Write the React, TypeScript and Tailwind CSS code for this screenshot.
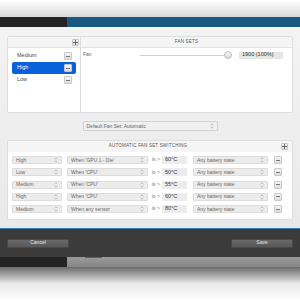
import React from "react";

const font = { fontFamily: '"Liberation Sans", Arial, sans-serif' };

function UpDown() {
  return (
    <svg width="4" height="6" viewBox="0 0 4 6" className="shrink-0">
      <path d="M0.5 2.3 L2 0.8 L3.5 2.3" fill="none" stroke="#999" strokeWidth="0.6" />
      <path d="M0.5 3.7 L2 5.2 L3.5 3.7" fill="none" stroke="#999" strokeWidth="0.6" />
    </svg>
  );
}

function Select({ label, w }: { label: string; w: string }) {
  return (
    <div
      className={`${w} h-[8px] shrink-0 flex items-center justify-between rounded-[1px] border border-[#dcdcdc] bg-[#ececec] pl-[3px] pr-[3px] text-[5px] leading-none text-[#666]`}
    >
      <span className="whitespace-nowrap">{label}</span>
      <UpDown />
    </div>
  );
}

function MinusBtn({ className = "" }: { className?: string }) {
  return (
    <div
      className={`w-[8px] h-[8px] shrink-0 flex items-center justify-center rounded-[1px] border border-[#c8c8c8] bg-gradient-to-b from-[#f4f4f4] to-[#dedede] ${className}`}
    >
      <div className="w-[4px] h-[1px] bg-[#777]" />
    </div>
  );
}

function PlusBtn() {
  return (
    <div className="w-[7px] h-[7px] shrink-0 flex items-center justify-center rounded-[1px] border border-[#c4c4c4] bg-gradient-to-b from-[#f6f6f6] to-[#e2e2e2] relative">
      <div className="w-[5px] h-[1px] bg-[#666]" />
      <div className="absolute w-[1px] h-[5px] bg-[#666]" />
    </div>
  );
}

const rules = [
  { a: "High", b: "When 'GPU 1 - Die'", t: "60°C" },
  { a: "Low", b: "When 'CPU'", t: "50°C" },
  { a: "Medium", b: "When 'CPU'", t: "55°C" },
  { a: "High", b: "When 'CPU'", t: "60°C" },
  { a: "Medium", b: "When any sensor", t: "80°C" },
];

export default function App() {
  return (
    <div className="w-[300px] h-[300px] overflow-hidden bg-white flex flex-col" style={font}>
      {/* top fade */}
      <div className="h-[17px] shrink-0 bg-gradient-to-b from-white to-[#d9d9d9]" />
      {/* top bar */}
      <div className="h-[10px] shrink-0 flex">
        <div className="w-[67px] bg-[#242424]" />
        <div className="flex-1 bg-[#1a5883]" />
      </div>
      {/* main */}
      <div className="h-[201px] shrink-0 bg-gradient-to-b from-[#f3f3f3] to-[#e9e9e9] px-[7px] pt-[9px] flex flex-col">
        {/* fan sets panel */}
        <div className="h-[77px] shrink-0 bg-white rounded-[2px] border border-[#dedede] flex overflow-hidden">
          <div className="w-[73px] shrink-0 border-r border-[#dcdcdc] flex flex-col">
            <div className="h-[11px] shrink-0 bg-[#f5f5f5] border-b border-[#e2e2e2] flex items-center justify-end pr-[1px]">
              <PlusBtn />
            </div>
            <div className="px-[4px] pt-[2px] flex flex-col">
              {["Medium", "High", "Low"].map((n) => {
                const sel = n === "High";
                return (
                  <div
                    key={n}
                    className={`h-[12px] flex items-center justify-between pl-[5px] pr-[4px] rounded-[2px] text-[5.5px] leading-none ${
                      sel ? "bg-[#0a62d8] text-white" : "text-[#444]"
                    }`}
                  >
                    <span>{n}</span>
                    <MinusBtn />
                  </div>
                );
              })}
            </div>
          </div>
          <div className="flex-1 flex flex-col">
            <div className="h-[11px] shrink-0 bg-[#f5f5f5] border-b border-[#e2e2e2] flex items-center justify-center text-[4.5px] tracking-[0.2px] text-[#555]">
              FAN SETS
            </div>
            <div className="flex items-center h-[10px] mt-[2px] pl-[2px]">
              <span className="text-[5px] text-[#666] w-[57px]">Fan</span>
              <div className="w-[87px] h-[1px] bg-[#cfcfcf]" />
              <div className="w-[8px] h-[8px] -ml-[3px] rounded-full border border-[#bdbdbd] bg-gradient-to-b from-[#fafafa] to-[#d6d6d6]" />
              <div className="ml-[7px] w-[44px] h-[7px] bg-[#e6e6e6] flex items-center pl-[3px] text-[5.5px] leading-none text-[#333]">
                1900 (100%)
              </div>
            </div>
          </div>
        </div>
        {/* default fan set */}
        <div className="mt-[8px] h-[10px] shrink-0 flex justify-center">
          <div className="w-[135px] h-[10px] flex items-center justify-between rounded-[1px] border border-[#d2d2d2] bg-[#f0f0f0] pl-[3px] pr-[3px] text-[5px] leading-none text-[#666]">
            <span>Default Fan Set: Automatic</span>
            <UpDown />
          </div>
        </div>
        {/* automatic switching panel */}
        <div className="mt-[9px] h-[80px] shrink-0 bg-white rounded-[2px] border border-[#dedede] flex flex-col overflow-hidden">
          <div className="h-[11px] shrink-0 bg-[#f5f5f5] flex items-center pr-[4px]">
            <div className="flex-1 text-center text-[4.5px] tracking-[0.2px] text-[#555] pl-[7px]">
              AUTOMATIC FAN SET SWITCHING
            </div>
            <PlusBtn />
          </div>
          <div className="flex flex-col pt-[4px] pl-[4px] gap-[4.3px]">
            {rules.map((r, i) => (
              <div key={i} className="flex items-center h-[8px]">
                <Select label={r.a} w="w-[50px]" />
                <div className="w-[5px]" />
                <Select label={r.b} w="w-[81px]" />
                <span className="w-[14px] pl-[4px] text-[5px] text-[#777] whitespace-nowrap">is &gt;</span>
                <div className="w-[25px] h-[8px] bg-[#ececec] flex items-center pl-[3px] text-[5.5px] leading-none text-[#333]">
                  {r.t}
                </div>
                <div className="w-[6px]" />
                <Select label="Any battery state" w="w-[75px]" />
                <div className="w-[6px]" />
                <MinusBtn />
              </div>
            ))}
          </div>
        </div>
      </div>
      {/* blue line */}
      <div className="h-[1px] shrink-0 bg-[#3d7fb0]" />
      {/* footer */}
      <div className="h-[28px] shrink-0 bg-[#3b3b3b] flex items-center justify-between px-[7px]">
        <div className="w-[62px] h-[9px] rounded-[1px] bg-gradient-to-b from-[#6a6a6a] to-[#575757] border border-[#4a4a4a] flex items-center justify-center text-[5px] text-[#e6e6e6]">
          Cancel
        </div>
        <div className="w-[62px] h-[9px] rounded-[1px] bg-gradient-to-b from-[#6a6a6a] to-[#575757] border border-[#4a4a4a] flex items-center justify-center text-[5px] text-[#e6e6e6]">
          Save
        </div>
      </div>
      {/* lower band */}
      <div className="h-[10px] shrink-0 flex">
        <div className="w-[67px] bg-[#232323]" />
        <div className="flex-1 bg-gradient-to-b from-[#9a9a9a] to-[#858585] relative">
          <div className="absolute left-[18px] top-0 w-[17px] h-[1px] bg-[#2a6da0]" />
        </div>
      </div>
      {/* bottom fade */}
      <div className="flex-1 bg-gradient-to-b from-[#6c6c6c] via-[#e8e8e8] to-white" />
    </div>
  );
}
